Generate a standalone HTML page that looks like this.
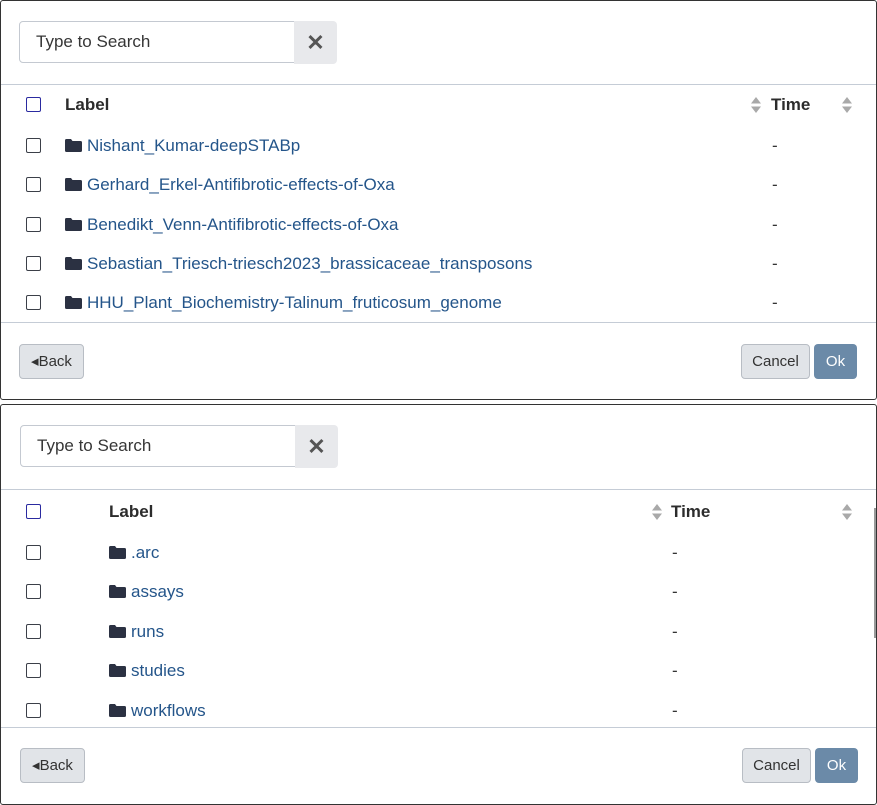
<html><head><style>
body{margin:0;width:877px;height:805px;background:#fff;font-family:"Liberation Sans",sans-serif;position:relative;overflow:hidden}
.p{position:absolute;left:0;width:875px;border:1px solid #333;border-radius:3px;background:#fff}
.a{position:absolute}
.inp{border:1px solid #c4c9d1;border-radius:4px 0 0 4px;height:41px;width:274px;box-sizing:border-box;font-size:17px;color:#363636;padding:10px 16px}
.xb{background:#e8e9ec;border-radius:0 4px 4px 0;width:43px;height:43px;text-align:center;line-height:43px;font-size:22px;color:#555;font-weight:bold}
.hr{height:1px;background:#c5ccd6;left:0;right:0}
.cb{width:13px;height:13px;border:1.5px solid #3b3f48;border-radius:2px}
.cbh{border-color:#2a2aa0}
.h{font-weight:bold;font-size:17px;color:#2c2c2c}
.lk{font-size:17px;color:#24558a}
.fd{width:17px;height:13px}
.dash{font-size:17px;color:#333}
.btn{background:#e1e4e8;border:1px solid #b8bdc4;border-radius:4px;font-size:15px;color:#333;text-align:center;box-sizing:border-box}
.ok{background:#6b8aa8;color:#fff;border-radius:4px;font-size:15px;text-align:center}
.sort{width:10px;height:16px}
</style></head><body>
<svg width="0" height="0" style="position:absolute"><defs>
<symbol id="f" viewBox="0 0 17 13"><path d="M0 1.5Q0 0 1.5 0H6L7.5 2H15.5Q17 2 17 3.5V11.5Q17 13 15.5 13H1.5Q0 13 0 11.5Z" fill="#2b3142"/></symbol>
<symbol id="s" viewBox="0 0 10 16"><path d="M5 0L10 6.5H0Z M5 16L10 9.5H0Z" fill="#a9a9a9"/></symbol>
</defs></svg>

<div class="p" style="top:0;height:398px">
<div class="a inp" style="left:18px;top:20px;height:42px;width:276px">Type to Search</div>
<div class="a xb" style="left:293px;top:20px">✕</div>
<div class="a hr" style="top:83px"></div>
<div class="a cb cbh" style="left:25px;top:96px"></div>
<div class="a h" style="left:64px;top:94px">Label</div>
<svg class="a sort" style="left:750px;top:96px"><use href="#s"/></svg>
<div class="a h" style="left:770px;top:94px">Time</div>
<svg class="a sort" style="left:841px;top:96px"><use href="#s"/></svg>
<div class="a cb" style="left:25px;top:137px"></div><svg class="a fd" style="left:64px;top:138px"><use href="#f"/></svg><div class="a lk" style="left:86px;top:135px">Nishant_Kumar-deepSTABp</div><div class="a dash" style="left:771px;top:135px">-</div>
<div class="a cb" style="left:25px;top:176px"></div><svg class="a fd" style="left:64px;top:177px"><use href="#f"/></svg><div class="a lk" style="left:86px;top:174px">Gerhard_Erkel-Antifibrotic-effects-of-Oxa</div><div class="a dash" style="left:771px;top:174px">-</div>
<div class="a cb" style="left:25px;top:216px"></div><svg class="a fd" style="left:64px;top:217px"><use href="#f"/></svg><div class="a lk" style="left:86px;top:214px">Benedikt_Venn-Antifibrotic-effects-of-Oxa</div><div class="a dash" style="left:771px;top:214px">-</div>
<div class="a cb" style="left:25px;top:255px"></div><svg class="a fd" style="left:64px;top:256px"><use href="#f"/></svg><div class="a lk" style="left:86px;top:253px">Sebastian_Triesch-triesch2023_brassicaceae_transposons</div><div class="a dash" style="left:771px;top:253px">-</div>
<div class="a cb" style="left:25px;top:294px"></div><svg class="a fd" style="left:64px;top:295px"><use href="#f"/></svg><div class="a lk" style="left:86px;top:292px">HHU_Plant_Biochemistry-Talinum_fruticosum_genome</div><div class="a dash" style="left:771px;top:292px">-</div>
<div class="a hr" style="top:321px"></div>
<div class="a btn" style="left:18px;top:343px;width:65px;height:35px;line-height:33px">◂Back</div>
<div class="a btn" style="left:740px;top:343px;width:69px;height:35px;line-height:33px">Cancel</div>
<div class="a ok" style="left:813px;top:343px;width:43px;height:35px;line-height:35px">Ok</div>
</div>

<div class="p" style="top:404px;height:399px">
<div class="a inp" style="left:19px;top:20px;height:42px;width:276px">Type to Search</div>
<div class="a xb" style="left:294px;top:20px">✕</div>
<div class="a hr" style="top:84px"></div>
<div class="a cb cbh" style="left:25px;top:99px"></div>
<div class="a h" style="left:108px;top:97px">Label</div>
<svg class="a sort" style="left:651px;top:99px"><use href="#s"/></svg>
<div class="a h" style="left:670px;top:97px">Time</div>
<svg class="a sort" style="left:841px;top:99px"><use href="#s"/></svg>
<div class="a" style="left:873px;top:103px;width:2px;height:130px;background:#999"></div>
<div class="a cb" style="left:25px;top:140px"></div><svg class="a fd" style="left:108px;top:141px"><use href="#f"/></svg><div class="a lk" style="left:130px;top:138px">.arc</div><div class="a dash" style="left:671px;top:138px">-</div>
<div class="a cb" style="left:25px;top:179px"></div><svg class="a fd" style="left:108px;top:180px"><use href="#f"/></svg><div class="a lk" style="left:130px;top:177px">assays</div><div class="a dash" style="left:671px;top:177px">-</div>
<div class="a cb" style="left:25px;top:219px"></div><svg class="a fd" style="left:108px;top:220px"><use href="#f"/></svg><div class="a lk" style="left:130px;top:217px">runs</div><div class="a dash" style="left:671px;top:217px">-</div>
<div class="a cb" style="left:25px;top:258px"></div><svg class="a fd" style="left:108px;top:259px"><use href="#f"/></svg><div class="a lk" style="left:130px;top:256px">studies</div><div class="a dash" style="left:671px;top:256px">-</div>
<div class="a cb" style="left:25px;top:298px"></div><svg class="a fd" style="left:108px;top:299px"><use href="#f"/></svg><div class="a lk" style="left:130px;top:296px">workflows</div><div class="a dash" style="left:671px;top:296px">-</div>
<div class="a hr" style="top:322px"></div>
<div class="a btn" style="left:19px;top:343px;width:65px;height:35px;line-height:33px">◂Back</div>
<div class="a btn" style="left:741px;top:343px;width:69px;height:35px;line-height:33px">Cancel</div>
<div class="a ok" style="left:814px;top:343px;width:43px;height:35px;line-height:35px">Ok</div>
</div>
</body></html>
